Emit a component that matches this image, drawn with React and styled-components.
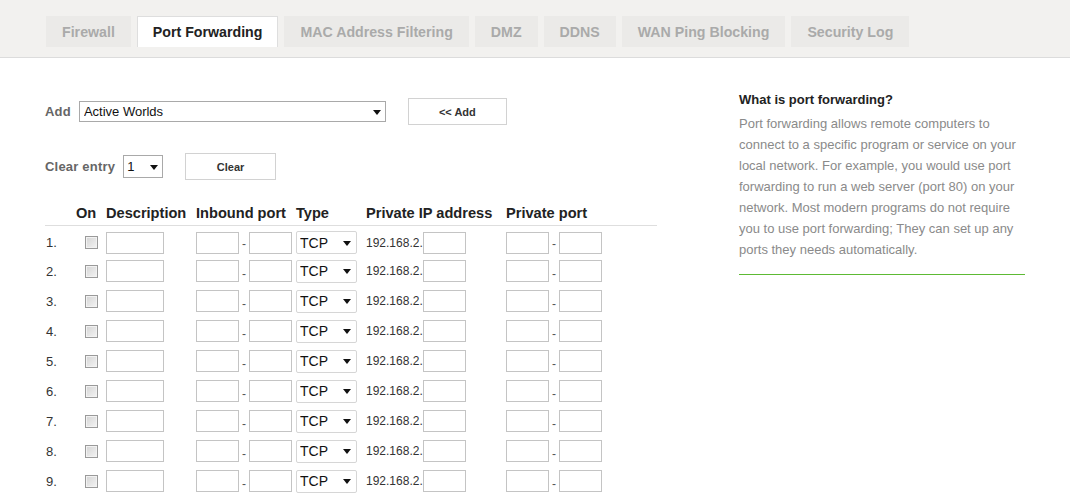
import React from "react";
import styled, { createGlobalStyle } from "styled-components";

const Global = createGlobalStyle`
  html, body { margin: 0; padding: 0; background: #fff; }
  body { font-family: "Liberation Sans", Arial, sans-serif; color: #333; }
  * { box-sizing: border-box; }
`;

const Header = styled.div`
  background: #f2f1ef;
  border-bottom: 1px solid #dcdcdc;
  height: 58px;
  padding: 16px 0 0 46px;
  display: flex;
  align-items: flex-start;
  gap: 6px;
`;

const Tab = styled.div`
  height: 31px;
  padding: 0 15px;
  display: flex;
  align-items: center;
  font-size: 14.2px;
  font-weight: bold;
  background: ${(p) => (p.$active ? "#fff" : "#ebeae8")};
  color: ${(p) => (p.$active ? "#222" : "#aaa")};
  border: 1px solid ${(p) => (p.$active ? "#dedede" : "#ebeae8")};
  border-bottom: none;
`;

const Main = styled.div`
  display: flex;
  padding: 40px 0 0 45px;
  gap: 82px;
`;

const LeftCol = styled.div`
  width: 612px;
  display: flex;
  flex-direction: column;
`;

const FormRow = styled.div`
  display: flex;
  align-items: center;
  height: 27px;
  margin-bottom: ${(p) => p.$mb || 0}px;
`;

const Label = styled.span`
  font-size: 13px;
  font-weight: bold;
  color: #666;
  letter-spacing: 0.2px;
  margin-right: 8px;
`;

const SelectWrap = styled.div`
  position: relative;
  display: inline-flex;
  width: ${(p) => p.$w}px;
  height: ${(p) => p.$h}px;
  margin-right: ${(p) => p.$mr || 0}px;
  &::after {
    content: "";
    position: absolute;
    right: ${(p) => p.$ar || 6}px;
    top: 50%;
    margin-top: -2px;
    border-left: 4px solid transparent;
    border-right: 4px solid transparent;
    border-top: 5px solid #111;
    pointer-events: none;
  }
`;

const Select = styled.select`
  appearance: none;
  -webkit-appearance: none;
  width: 100%;
  height: 100%;
  border: 1px solid ${(p) => p.$border || "#a9a9a9"};
  border-radius: ${(p) => p.$radius || 0}px;
  background: #fff;
  font-family: "Liberation Sans", Arial, sans-serif;
  font-size: ${(p) => p.$fs || 13}px;
  color: #111;
  padding: 0 0 0 ${(p) => p.$pl || 4}px;
  outline: none;
`;

const Button = styled.button`
  width: ${(p) => p.$w}px;
  height: 27px;
  background: #fff;
  border: 1px solid #d2d2d2;
  font-family: "Liberation Sans", Arial, sans-serif;
  font-size: 11px;
  font-weight: bold;
  color: #333;
  padding: 0;
`;

const Table = styled.div`
  display: grid;
  grid-template-columns: 31px 30px 90px 100px 70px 140px 1fr;
  margin-top: 23px;
`;

const HeadCell = styled.div`
  font-size: 14.6px;
  font-weight: bold;
  color: #222;
  height: 23px;
  padding-bottom: 3px;
  display: flex;
  align-items: center;
  border-bottom: 1px solid #dedede;
  white-space: nowrap;
`;

const Cell = styled.div`
  height: 30px;
  display: flex;
  align-items: center;
  padding-top: ${(p) => (p.$first ? 3 : 0)}px;
  font-size: ${(p) => p.$fs || 13}px;
  color: #333;
`;

const RowNum = styled.span`
  padding-left: 1px;
`;

const Check = styled.input.attrs({ type: "checkbox" })`
  appearance: none;
  -webkit-appearance: none;
  width: 13px;
  height: 13px;
  margin: 0 0 0 9px;
  border: 1px solid #9a9a9a;
  background: linear-gradient(135deg, #d4d4d4, #f4f4f4);
  box-shadow: inset 0 0 0 1px #f2f2f2;
`;

const TextInput = styled.input.attrs({ type: "text" })`
  width: ${(p) => p.$w || 43}px;
  height: 22px;
  border: 1px solid #c4c4c4;
  background: #fff;
  padding: 0 3px;
  margin: 0;
  outline: none;
  font-family: "Liberation Sans", Arial, sans-serif;
  font-size: 13px;
`;

const Dash = styled.span`
  width: 10px;
  text-align: center;
  font-size: 12px;
  color: #555;
  align-self: flex-end;
  margin-bottom: 5px;
`;

const IpPrefix = styled.span`
  font-size: 12px;
  color: #333;
`;

const RightCol = styled.div`
  width: 286px;
  margin-top: -6px;
`;

const InfoTitle = styled.div`
  font-size: 13px;
  font-weight: bold;
  color: #222;
  line-height: 16px;
`;

const InfoText = styled.p`
  margin: 5px 0 0;
  font-size: 13px;
  line-height: 21px;
  color: #8a8a8a;
`;

const GreenRule = styled.div`
  height: 1px;
  background: #5dba34;
  margin-top: 14px;
`;

const tabs = [
  "Firewall",
  "Port Forwarding",
  "MAC Address Filtering",
  "DMZ",
  "DDNS",
  "WAN Ping Blocking",
  "Security Log",
];

const heads = ["", "On", "Description", "Inbound port", "Type", "Private IP address", "Private port"];

function PortPair() {
  return (
    <>
      <TextInput $w={43} />
      <Dash>-</Dash>
      <TextInput $w={43} />
    </>
  );
}

export default function App() {
  const rows = [1, 2, 3, 4, 5, 6, 7, 8, 9];
  return (
    <>
      <Global />
      <Header>
        {tabs.map((t) => (
          <Tab key={t} $active={t === "Port Forwarding"}>
            {t}
          </Tab>
        ))}
      </Header>
      <Main>
        <LeftCol>
          <FormRow $mb={28}>
            <Label>Add</Label>
            <SelectWrap $w={307} $h={21} $mr={22} $ar={5}>
              <Select defaultValue="aw">
                <option value="aw">Active Worlds</option>
              </Select>
            </SelectWrap>
            <Button $w={99}>&lt;&lt; Add</Button>
          </FormRow>
          <FormRow>
            <Label>Clear entry</Label>
            <SelectWrap $w={40} $h={23} $mr={22} $ar={5}>
              <Select defaultValue="1" $pl={3}>
                <option value="1">1</option>
              </Select>
            </SelectWrap>
            <Button $w={91}>Clear</Button>
          </FormRow>
          <Table>
            {heads.map((h, i) => (
              <HeadCell key={i}>{h}</HeadCell>
            ))}
            {rows.map((n) => (
              <React.Fragment key={n}>
                <Cell $first={n === 1}>
                  <RowNum>{n}.</RowNum>
                </Cell>
                <Cell $first={n === 1}>
                  <Check />
                </Cell>
                <Cell $first={n === 1}>
                  <TextInput $w={58} />
                </Cell>
                <Cell $first={n === 1}>
                  <PortPair />
                </Cell>
                <Cell $first={n === 1}>
                  <SelectWrap $w={61} $h={23} $ar={6}>
                    <Select defaultValue="TCP" $border="#d6d6d6" $radius={2} $fs={14} $pl={3}>
                      <option>TCP</option>
                      <option>UDP</option>
                      <option>Both</option>
                    </Select>
                  </SelectWrap>
                </Cell>
                <Cell $first={n === 1}>
                  <IpPrefix>192.168.2.</IpPrefix>
                  <TextInput $w={43} />
                </Cell>
                <Cell $first={n === 1}>
                  <PortPair />
                </Cell>
              </React.Fragment>
            ))}
          </Table>
        </LeftCol>
        <RightCol>
          <InfoTitle>What is port forwarding?</InfoTitle>
          <InfoText>
            Port forwarding allows remote computers to connect to a specific program or service on your
            local network. For example, you would use port forwarding to run a web server (port 80) on your
            network. Most modern programs do not require you to use port forwarding; They can set up any
            ports they needs automatically.
          </InfoText>
          <GreenRule />
        </RightCol>
      </Main>
    </>
  );
}
